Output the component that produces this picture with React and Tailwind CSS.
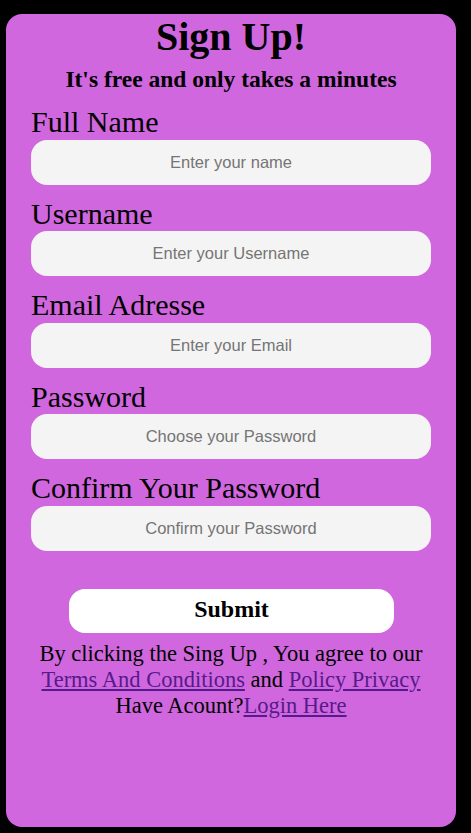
import React from "react";

const fields = [
  { label: "Full Name", placeholder: "Enter your name", type: "text" },
  { label: "Username", placeholder: "Enter your Username", type: "text" },
  { label: "Email Adresse", placeholder: "Enter your Email", type: "email" },
  { label: "Password", placeholder: "Choose your Password", type: "password" },
  { label: "Confirm Your Password", placeholder: "Confirm your Password", type: "password" },
];

export default function App() {
  return (
    <div className="min-h-screen w-full bg-black pt-[14px] pl-[6px]">
      <div
        className="flex h-[813px] w-[450px] flex-col rounded-[16px] bg-[#d067de] text-black"
        style={{ fontFamily: '"Liberation Serif", "Times New Roman", serif' }}
      >
        <h1 className="m-0 text-center text-[40px] font-bold leading-[46px]">Sign Up!</h1>
        <p className="mt-[6px] text-center text-[23.5px] font-bold leading-[27px]">
          It's free and only takes a minutes
        </p>
        <form className="mt-[12px] flex flex-col px-[25px]" onSubmit={(e) => e.preventDefault()}>
          {fields.map((f) => (
            <div key={f.label} className="flex flex-col mb-[12px]">
              <label className="text-[30px] leading-[34.5px]">{f.label}</label>
              <input
                type={f.type}
                placeholder={f.placeholder}
                className="h-[45px] w-[400px] rounded-[16px] border-0 bg-[#f4f4f4] text-center text-[16.5px] text-black outline-none placeholder:text-[#757575]"
                style={{ fontFamily: '"Liberation Sans", Arial, sans-serif' }}
              />
            </div>
          ))}
          <button
            type="submit"
            className="mt-[26px] ml-[38px] flex h-[44px] w-[325px] items-center justify-center rounded-[16px] bg-white pb-[3px] text-[24px] font-bold"
          >
            Submit
          </button>
        </form>
        <div className="mt-[8px] text-center text-[22.5px] leading-[26px]">
          <p>By clicking the Sing Up , You agree to our</p>
          <p>
            <a href="#" className="text-[#551a8b] underline">Terms And Conditions</a> and{" "}
            <a href="#" className="text-[#551a8b] underline">Policy Privacy</a>
          </p>
          <p>
            Have Acount?<a href="#" className="text-[#551a8b] underline">Login Here</a>
          </p>
        </div>
      </div>
    </div>
  );
}
